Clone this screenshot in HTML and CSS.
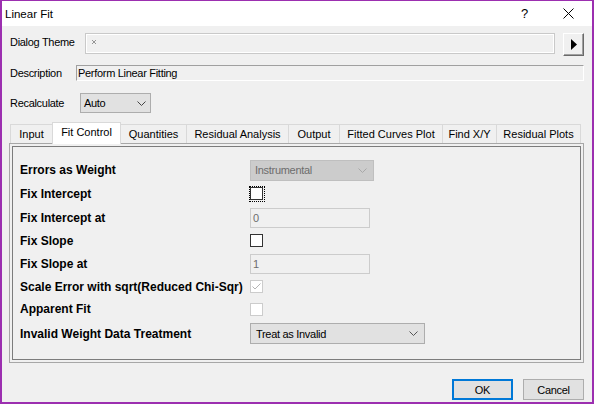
FILE: index.html
```html
<!DOCTYPE html>
<html>
<head>
<meta charset="utf-8">
<title>Linear Fit</title>
<link rel="stylesheet" href="styles.css">
</head>
<body>
<div class="window">
  <div class="titlebar">
    <span class="title">Linear Fit</span>
    <div class="tb-btns">
      <span class="tb-btn help">?</span>
      <span class="tb-btn close">
        <svg width="11" height="11" viewBox="0 0 11 11"><path d="M0.5 0.5 L10.5 10.5 M10.5 0.5 L0.5 10.5" stroke="#000" stroke-width="1" fill="none"/></svg>
      </span>
    </div>
  </div>
  <div class="content">
    <div class="row theme-row">
      <span class="lbl lbl-theme">Dialog Theme</span>
      <div class="theme-box">
        <svg class="theme-x" width="4" height="4" viewBox="0 0 4 4"><path d="M0 0 L4 4 M4 0 L0 4" stroke="#8a8a8a" stroke-width="0.9" fill="none"/></svg>
      </div>
      <div class="arrow-btn">
        <svg width="6" height="11" viewBox="0 0 6 11"><polygon points="0,0 6,5.5 0,11" fill="#000"/></svg>
      </div>
    </div>
    <div class="row desc-row">
      <span class="lbl lbl-desc">Description</span>
      <div class="desc-box">Perform Linear Fitting</div>
    </div>
    <div class="row recalc-row">
      <span class="lbl lbl-recalc">Recalculate</span>
      <div class="combo recalc-combo">
        <span>Auto</span>
        <svg class="chev" width="9" height="5" viewBox="0 0 9 5"><path d="M0.5 0.5 L4.5 4.5 L8.5 0.5" stroke="#444" stroke-width="1" fill="none"/></svg>
      </div>
    </div>
    <div class="tabs">
      <span class="tab">Input</span>
      <span class="tab active">Fit Control</span>
      <span class="tab">Quantities</span>
      <span class="tab">Residual Analysis</span>
      <span class="tab">Output</span>
      <span class="tab">Fitted Curves Plot</span>
      <span class="tab">Find X/Y</span>
      <span class="tab last">Residual Plots</span>
    </div>
    <div class="tab-page">
      <div class="group">
        <div class="form">
          <span class="flabel">Errors as Weight</span>
          <div class="combo combo-disabled errors-combo">
            <span>Instrumental</span>
            <svg class="chev" width="9" height="5" viewBox="0 0 9 5"><path d="M0.5 0.5 L4.5 4.5 L8.5 0.5" stroke="#a8a8a8" stroke-width="1" fill="none"/></svg>
          </div>

          <span class="flabel">Fix Intercept</span>
          <span class="focus-wrap"><span class="check"></span></span>

          <span class="flabel">Fix Intercept at</span>
          <div class="textbox disabled">0</div>

          <span class="flabel">Fix Slope</span>
          <span class="check"></span>

          <span class="flabel">Fix Slope at</span>
          <div class="textbox disabled">1</div>

          <span class="flabel">Scale Error with sqrt(Reduced Chi-Sqr)</span>
          <span class="check check-disabled">
            <svg width="11" height="11" viewBox="0 0 11 11"><path d="M1.5 5.5 L4 8 L9.5 2.5" stroke="#b4b4b4" stroke-width="1" fill="none"/></svg>
          </span>

          <span class="flabel">Apparent Fit</span>
          <span class="check check-disabled"></span>

          <span class="flabel">Invalid Weight Data Treatment</span>
          <div class="combo invalid-combo">
            <span>Treat as Invalid</span>
            <svg class="chev" width="9" height="5" viewBox="0 0 9 5"><path d="M0.5 0.5 L4.5 4.5 L8.5 0.5" stroke="#555" stroke-width="1" fill="none"/></svg>
          </div>
        </div>
      </div>
    </div>
    <div class="buttons">
      <span class="btn btn-default">OK</span>
      <span class="btn">Cancel</span>
    </div>
  </div>
</div>
</body>
</html>
```

FILE: styles.css
```css
* { box-sizing: border-box; }
html, body { margin: 0; padding: 0; }
body {
  width: 594px;
  height: 404px;
  overflow: hidden;
  font-family: "Liberation Sans", Arial, sans-serif;
  font-size: 11px;
  letter-spacing: -0.3px;
  color: #000;
  background: #f0f0f0;
}
.window {
  width: 594px;
  height: 404px;
  border: 2px solid #9c2fb0;
  border-top-width: 1px;
  background: #f0f0f0;
  display: flex;
  flex-direction: column;
}
.titlebar {
  flex: none;
  height: 25px;
  background: #fff;
  display: flex;
  align-items: center;
  padding-left: 3px;
}
.title { flex: 1; font-size: 11.5px; letter-spacing: 0; }
.tb-btns { display: flex; height: 100%; }
.tb-btn {
  width: 46px;
  display: flex;
  align-items: center;
  justify-content: center;
}
.help { font-size: 13px; letter-spacing: 0; padding-left: 3px; }
.close svg { display: block; margin-left: -1px; }

.content {
  flex: 1;
  display: flex;
  flex-direction: column;
  padding: 7px 8px 0 8px;
}
.row { display: flex; align-items: center; flex: none; }
.lbl { flex: none; }
.theme-row { height: 23px; align-items: flex-start; }
.lbl-theme { width: 75px; line-height: 18px; }
.theme-box {
  width: 470px;
  height: 21px;
  border: 1px solid #c9c9c9;
  box-shadow: inset 0 0 0 1px #fff;
  padding: 6px 0 0 6px;
}
.theme-x { display: block; }
.arrow-btn {
  margin-left: auto;
  width: 21px;
  height: 23px;
  border: 1px solid;
  border-color: #fff #6a6a6a #6a6a6a #fff;
  box-shadow: inset -1px -1px 0 #a0a0a0;
  display: flex;
  align-items: center;
  justify-content: center;
  padding-bottom: 1px;
}
.arrow-btn svg { display: block; }

.desc-row { margin-top: 9px; height: 16px; }
.lbl-desc { width: 66px; }
.desc-box {
  flex: 1;
  height: 16px;
  border: 1px solid;
  border-color: #a0a0a0 #fff #fff #a0a0a0;
  padding-left: 1px;
  line-height: 14px;
}

.recalc-row { margin-top: 12px; height: 20px; }
.lbl-recalc { width: 70px; }

.combo {
  display: flex;
  align-items: center;
  justify-content: space-between;
  height: 21px;
  background: #e1e1e1;
  border: 1px solid #adadad;
  padding: 0 6px 0 4px;
}
.recalc-combo { width: 71px; height: 20px; padding-left: 3px; padding-right: 4px; }
.chev { display: block; flex: none; }
.combo-disabled {
  background: #cccccc;
  border-color: #bfbfbf;
  color: #6d6d6d;
}
.errors-combo { width: 124px; }
.invalid-combo { width: 175px; padding-left: 5px; }

.tabs {
  margin-top: 9px;
  height: 21px;
  display: flex;
  align-items: flex-end;
  flex: none;
  letter-spacing: 0;
}
.tab {
  height: 19px;
  border-top: 1px solid #d9d9d9;
  border-left: 1px solid #d9d9d9;
  background: #f0f0f0;
  display: flex;
  align-items: center;
  justify-content: center;
  padding-bottom: 1px;
  white-space: nowrap;
}
.tab.last { border-right: 1px solid #d9d9d9; }
.tab.active {
  height: 22px;
  margin-bottom: -1px;
  background: #fff;
  border-right: 1px solid #d9d9d9;
  position: relative;
  z-index: 1;
  padding-bottom: 3px;
}
.tab.active + .tab { border-left: none; }
.tab:nth-child(1) { width: 42px; }
.tab:nth-child(2) { width: 69px; }
.tab:nth-child(3) { width: 65px; }
.tab:nth-child(4) { width: 102px; }
.tab:nth-child(5) { width: 51px; }
.tab:nth-child(6) { width: 103px; }
.tab:nth-child(7) { width: 54px; }
.tab:nth-child(8) { width: 85px; }

.tab-page {
  flex: none;
  height: 220px;
  margin-left: -1px;
  border: 1px solid #a7a7a7;
  padding: 2px;
}
.group {
  height: 100%;
  border: 1px solid #7c7c7c;
  padding: 11px 0 0 7px;
}
.form {
  display: grid;
  grid-template-columns: 230px auto;
  grid-template-rows: 24px 24px 23px 23px 23px 23px 22px 27px;
  align-items: center;
  justify-items: start;
}
.flabel {
  font-size: 12px;
  font-weight: bold;
  letter-spacing: 0;
  white-space: nowrap;
}
.check {
  display: block;
  width: 13px;
  height: 13px;
  background: #fff;
  border: 1px solid #333;
}
.focus-wrap {
  display: block;
  width: 16px;
  height: 16px;
  outline: 1px dotted #000;
  outline-offset: -1px;
  padding: 1px 0 0 1px;
  margin-left: -1px;
}
.check-disabled { border-color: #cccccc; }
.check-disabled svg { display: block; margin: 0; }
.textbox {
  width: 120px;
  height: 20px;
  border: 1px solid #cccccc;
  padding-left: 2px;
  line-height: 18px;
}
.textbox.disabled { color: #6d6d6d; background: #f0f0f0; }

.buttons {
  margin-top: 16px;
  display: flex;
  justify-content: flex-end;
  gap: 10px;
}
.btn {
  width: 61px;
  height: 21px;
  background: #e1e1e1;
  border: 1px solid #adadad;
  display: flex;
  align-items: center;
  justify-content: center;
}
.btn-default { border: 2px solid #0078d7; }
```
